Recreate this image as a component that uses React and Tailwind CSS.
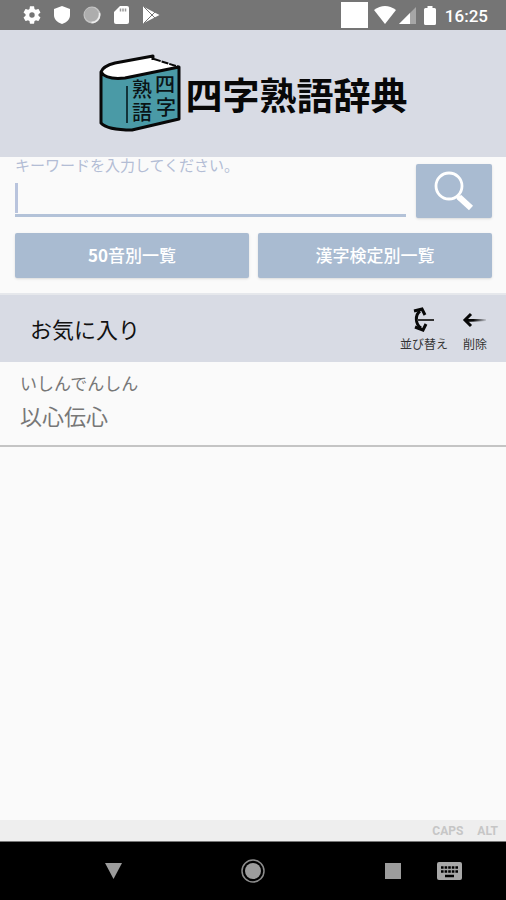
const favorites = [{ reading: 'いしんでんしん', word: '以心伝心' }];

function StatusBar() {
  return (
    <div className="flex h-[30px] items-center justify-between bg-[#757575] pl-[23px] pr-[18px] text-white">
      <div className="flex items-center gap-3">
        <svg className="h-[18px] w-[18px]" viewBox="2 2 20 20" fill="currentColor">
          <path d="M19.14 12.94c.04-.3.06-.61.06-.94s-.02-.64-.07-.94l2.03-1.58c.18-.14.23-.41.12-.61l-1.92-3.32c-.12-.22-.37-.29-.59-.22l-2.39.96c-.5-.38-1.03-.7-1.62-.94l-.36-2.54c-.04-.24-.24-.41-.48-.41h-3.84c-.24 0-.43.17-.47.41l-.36 2.54c-.59.24-1.13.57-1.62.94l-2.39-.96c-.22-.08-.47 0-.59.22L2.74 8.87c-.12.21-.08.47.12.61l2.03 1.58c-.05.3-.09.63-.09.94s.02.64.07.94l-2.03 1.58c-.18.14-.23.41-.12.61l1.92 3.32c.12.22.37.29.59.22l2.39-.96c.5.38 1.03.7 1.62.94l.36 2.54c.05.24.24.41.48.41h3.84c.24 0 .44-.17.47-.41l.36-2.54c.59-.24 1.13-.56 1.62-.94l2.39.96c.22.08.47 0 .59-.22l1.92-3.32c.12-.22.07-.47-.12-.61l-2.01-1.58zM12 15a3 3 0 1 1 0-6 3 3 0 0 1 0 6z" />
        </svg>
        <svg className="h-[18px] w-[18px]" viewBox="0 0 18 18" fill="currentColor">
          <path d="M9 0l8 3v6c0 4-3 7.500-8 9-5-1.500-8-5-8-9V3z" />
        </svg>
        <svg className="h-[18px] w-[18px]" viewBox="0 0 18 18">
          <circle cx="9" cy="9" r="8.500" fill="#c4c4c4" />
          <circle cx="8.500" cy="8.500" r="7" fill="#adadad" />
          <path d="M16.500 7a8 8 0 0 1-8 9.500" fill="none" stroke="#eee" strokeWidth="1.500" />
        </svg>
        <svg className="h-[18px] w-[18px]" viewBox="0 0 18 18">
          <path d="M7 0h7q2 0 2 2v14q0 2-2 2H3q-2 0-2-2V6z" fill="currentColor" />
          <path d="M7.500 2.500v3M10 2.500v3M12.500 2.500v3" stroke="#999" strokeWidth="1.500" />
        </svg>
        <svg className="h-[18px] w-[18px]" viewBox="0 0 18 18">
          <path d="M0 .5L16.500 9 0 17.500z" fill="currentColor" />
          <path d="M1 1l11 11M1 17L12 6" stroke="#757575" strokeWidth="1" />
        </svg>
      </div>
      <div className="flex items-center">
        <span className="h-[26px] w-[27px] bg-white" />
        <svg className="ml-[6px] h-[18px] w-[22px]" viewBox="0 0 22 18" fill="currentColor">
          <path d="M0 4Q11-4 22 4L11 18z" />
        </svg>
        <svg className="ml-[3px] h-[17px] w-[17px]" viewBox="0 0 17 17">
          <path d="M17 0v17H0z" fill="#a6a6a6" />
          <path d="M11 6v11H0z" fill="#fff" />
        </svg>
        <svg className="ml-[8px] h-[19px] w-[12px]" viewBox="0 0 12 19" fill="currentColor">
          <path d="M3.500 0h5v2h2Q12 2 12 3.500v14Q12 19 10.500 19h-9Q0 19 0 17.500v-14Q0 2 1.500 2h2z" />
        </svg>
        <span className="ml-[9px] pt-px font-['Roboto',sans-serif] text-[17px] leading-5 font-medium">16:25</span>
      </div>
    </div>
  );
}

function BookLogo() {
  return (
    <svg className="h-[80px] w-[84px]" viewBox="0 0 84 80" aria-hidden="true">
      <path d="M2 17Q4 12 15 10L55 2l1 3 24 9-54 10Q8 26 2 17z" fill="#fff" />
      <path d="M2 17Q6 25 25 24L80 13v51L33 76Q9 77 2 69z" fill="#4a9aa6" />
      <g fill="none" stroke="#080808" strokeWidth="3" strokeLinejoin="round">
        <path d="M54 6V2L16 9Q4 12 2 18v51q6 7 31 7l47-11V13L26 24Q7 26 2 18" />
        <path d="M55 5l25 8" strokeWidth="2" strokeDasharray="7 1" />
      </g>
      <path d="M28 32v37" stroke="#12343a" strokeWidth="2" />
      <g fill="#0a1416" fontFamily="'Noto Sans CJK JP', sans-serif" fontSize="20" fontWeight="500">
        <text x="56" y="38">四</text>
        <text x="57" y="61">字</text>
        <text x="33" y="43">熟</text>
        <text x="33" y="66">語</text>
      </g>
    </svg>
  );
}

function SearchForm() {
  return (
    <form className="pt-[7px] pr-[14px] pb-[15px] pl-[15px]" onSubmit={(e) => e.preventDefault()}>
      <div className="flex gap-[10px]">
        <div className="relative flex-1">
          <label htmlFor="keyword" className="block h-[17px] text-[15px] leading-[2px] text-[#b3bdd5]">
            キーワードを入力してください。
          </label>
          <input id="keyword" type="text" className="block h-[36px] w-full border-b-[3px] border-[#b3c2d8] bg-transparent px-1 text-lg outline-none" />
          <span className="absolute top-[19px] left-0 h-[30px] w-[3px] bg-[#b9c4dd]" />
        </div>
        <button type="submit" aria-label="検索" className="flex h-[54px] w-[76px] items-center justify-center rounded-xs bg-[#a9bbd1] shadow-sm">
          <svg className="h-[40px] w-[40px]" viewBox="0 0 40 40" fill="none" stroke="#fff">
            <circle cx="15" cy="15" r="13" strokeWidth="2.800" />
            <path d="M23 25l3 3" strokeWidth="4" />
            <path d="M25 26l12 11" strokeWidth="6" />
          </svg>
        </button>
      </div>
      <div className="mt-[15px] grid grid-cols-2 gap-[9px] text-[17px] leading-6 font-medium text-white">
        <button type="button" className="h-[45px] rounded-xs bg-[#a9bbd1] pb-px shadow-sm">
          <span className="font-bold">50</span>音別一覧
        </button>
        <button type="button" className="h-[45px] rounded-xs bg-[#a9bbd1] pb-px shadow-sm">漢字検定別一覧</button>
      </div>
    </form>
  );
}

function FavoritesHeader() {
  return (
    <div className="flex h-[69px] items-center justify-between border-t-2 border-[#e6e8ec] bg-[#d8dbe4] pr-[18px] pb-px pl-[30px] text-[#111]">
      <h2 className="text-[22px] leading-8">お気に入り</h2>
      <div className="flex gap-[14px] text-[12px] leading-4 text-[#333]">
        <button type="button" className="flex flex-col items-center gap-[3px]">
          <svg className="h-[28px] w-[24px]" viewBox="0 0 24 28" fill="none" stroke="#080808">
            <path d="M8 6C3 10 3 19 9 23" strokeWidth="3" />
            <path d="M5 15h17" stroke="#333" strokeWidth="2" />
            <path d="M2 6l8-2 3 6M3 22l8 3 3-6" strokeWidth="3" />
          </svg>
          並び替え
        </button>
        <button type="button" className="flex flex-col items-center gap-[3px]">
          <svg className="h-[28px] w-[26px]" viewBox="0 0 26 28">
            <defs>
              <linearGradient id="shaft" x1="0" x2="1">
                <stop offset="0.400" stopColor="#080808" />
                <stop offset="1" stopColor="#080808" stopOpacity="0.100" />
              </linearGradient>
            </defs>
            <path d="M3 14l21 0v2L3 17z" fill="url(#shaft)" />
            <path d="M9 9l-6 6 6 6" fill="none" stroke="#080808" strokeWidth="3" />
          </svg>
          削除
        </button>
      </div>
    </div>
  );
}

function NavigationBar() {
  return (
    <nav className="grid h-[59px] grid-cols-[1fr_auto_1fr] items-center border-t border-[#777] bg-black">
      <button type="button" aria-label="戻る" className="mr-[119px] justify-self-end">
        <svg className="block h-[16px] w-[17px]" viewBox="0 0 17 16" fill="#9c9c9c">
          <path d="M0 0h17L8.500 16z" />
        </svg>
      </button>
      <button type="button" aria-label="ホーム">
        <svg className="block h-[24px] w-[24px]" viewBox="0 0 24 24">
          <circle cx="12" cy="12" r="8" fill="#9c9c9c" />
          <circle cx="12" cy="12" r="11" fill="none" stroke="#8c8c8c" strokeWidth="1.500" />
        </svg>
      </button>
      <div className="flex items-center justify-end gap-[36px] pr-[44px]">
        <button type="button" aria-label="履歴" className="h-[16px] w-[16px] bg-[#9c9c9c]" />
        <button type="button" aria-label="キーボード">
          <svg className="block h-[18px] w-[25px]" viewBox="0 0 25 18">
            <rect width="25" height="18" rx="2" fill="#a8a8a8" />
            <path d="M4 5.500h17M4 9.500h17" stroke="#000" strokeWidth="2.500" strokeDasharray="2.600 1" />
            <path d="M8 14h9" stroke="#000" strokeWidth="2.500" />
          </svg>
        </button>
      </div>
    </nav>
  );
}

export default function App() {
  return (
    <div lang="ja" className="flex min-h-screen flex-col bg-[#fafafa] font-['Noto_Sans_CJK_JP',sans-serif]">
      <StatusBar />
      <header className="flex h-[127px] items-center justify-center gap-[3px] bg-[#d8dbe4]">
        <BookLogo />
        <h1 className="text-[37px] leading-10 font-bold text-[#080808]">四字熟語辞典</h1>
      </header>
      <main className="flex-1">
        <SearchForm />
        <FavoritesHeader />
        <ul>
          {favorites.map((item) => (
            <li key={item.word} className="border-b-2 border-[#c4c4c4] px-5 pt-[5px] pb-[14px] text-[#777]">
              <p className="text-[17px] leading-8">{item.reading}</p>
              <p className="text-[22px] leading-8">{item.word}</p>
            </li>
          ))}
        </ul>
      </main>
      <div className="flex h-[21px] items-center justify-end gap-[14px] bg-[#eee] pr-2 font-['Roboto',sans-serif] text-[12px] font-bold text-[#c6c6c6]">
        <span>CAPS</span>
        <span>ALT</span>
      </div>
      <NavigationBar />
    </div>
  );
}
